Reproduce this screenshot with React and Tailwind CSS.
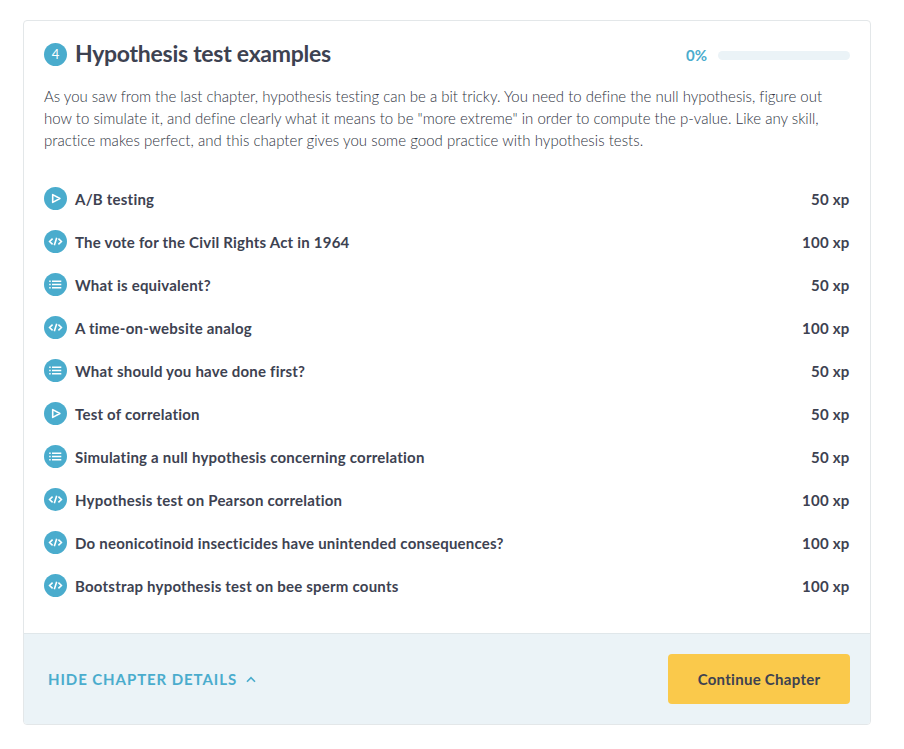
import React from "react";

const exercises = [
  { type: "video", title: "A/B testing", xp: 50 },
  { type: "code", title: "The vote for the Civil Rights Act in 1964", xp: 100 },
  { type: "list", title: "What is equivalent?", xp: 50 },
  { type: "code", title: "A time-on-website analog", xp: 100 },
  { type: "list", title: "What should you have done first?", xp: 50 },
  { type: "video", title: "Test of correlation", xp: 50 },
  { type: "list", title: "Simulating a null hypothesis concerning correlation", xp: 50 },
  { type: "code", title: "Hypothesis test on Pearson correlation", xp: 100 },
  { type: "code", title: "Do neonicotinoid insecticides have unintended consequences?", xp: 100 },
  { type: "code", title: "Bootstrap hypothesis test on bee sperm counts", xp: 100 },
];

function ExerciseIcon({ type }) {
  return (
    <svg width="23" height="23" viewBox="0 0 23 23" fill="none" stroke="#fff" className="shrink-0">
      <circle cx="11.5" cy="11.5" r="11.5" fill="#4aaccd" stroke="none" />
      {type === "video" && (
        <path d="M8.7 7.6v7.8l7.2-3.9z" strokeWidth="1.6" strokeLinejoin="round" />
      )}
      {type === "code" && (
        <path d="M8.6 8.6 5.6 11.5l3 2.9M14.4 8.6l3 2.9-3 2.9M12.7 7.8l-2.4 7.4" strokeWidth="1.6" />
      )}
      {type === "list" && (
        <path d="M5.2 8.3h1.5M8 8.3h9.3M5.2 11.5h1.5M8 11.5h9.3M5.2 14.7h1.5M8 14.7h9.3" strokeWidth="1.5" />
      )}
    </svg>
  );
}

export default function App() {
  return (
    <div className="h-[749px] bg-white pt-5 pl-[23px] font-['Lato',sans-serif] text-[#3d4251]">
      <section className="flex h-[705px] w-[848px] flex-col overflow-hidden rounded-[4px] border border-[#e3e7e9]">
        <div className="flex-1 px-5 pt-[18px]">
          <header className="flex h-[31px] items-center">
            <span className="flex size-[23px] items-center justify-center rounded-full bg-[#4aaccd] text-[13px] leading-none text-white">
              4
            </span>
            <h2 className="ml-2 pb-[2px] text-[23px] leading-[29px] font-bold tracking-[-0.27px]">Hypothesis test examples</h2>
            <div className="ml-auto flex items-center pt-[2px]">
              <span className="pb-[2px] text-[15px] leading-5 font-bold text-[#4aaccd]">0%</span>
              <div className="ml-[11px] h-[9px] w-[132px] rounded-full bg-[#ebf3f7]" />
            </div>
          </header>
          <p className="mt-[15px] text-[15px] leading-[22px] font-light whitespace-nowrap text-[#2f3442]">
            <span className="tracking-[-0.01px]">
              As you saw from the last chapter, hypothesis testing can be a bit tricky. You need to define the null hypothesis, figure out
            </span>
            <br />
            <span className="tracking-[0.02px]">
              how to simulate it, and define clearly what it means to be "more extreme" in order to compute the p-value. Like any skill,
            </span>
            <br />
            <span className="tracking-[0.045px]">
              practice makes perfect, and this chapter gives you some good practice with hypothesis tests.
            </span>
          </p>
          <ul className="mt-[26px]">
            {exercises.map((item) => (
              <li key={item.title} className="flex h-[43px] items-center text-[15px] font-bold tracking-[0.22px]">
                <ExerciseIcon type={item.type} />
                <span className="ml-2 pt-[2px]">{item.title}</span>
                <span className="mr-[0.5px] ml-auto pt-[2px]">{item.xp} xp</span>
              </li>
            ))}
          </ul>
        </div>
        <footer className="flex h-[91px] items-center justify-between border-t border-[#e0e7ea] bg-[#ebf3f7] pt-px pr-5 pl-6">
          <button className="flex items-center text-[15px] font-bold tracking-[0.92px] text-[#4aaccd]">
            HIDE CHAPTER DETAILS
            <svg width="10" height="7" viewBox="0 0 10 7" fill="none" stroke="#4aaccd" strokeWidth="1.6" className="ml-[9px]">
              <path d="M1 5.8 5 1.6 9 5.8" />
            </svg>
          </button>
          <button className="mb-px h-[50px] w-[182px] rounded-[4px] bg-[#fac94b] text-[15px] font-bold tracking-[0.28px]">Continue Chapter</button>
        </footer>
      </section>
    </div>
  );
}
